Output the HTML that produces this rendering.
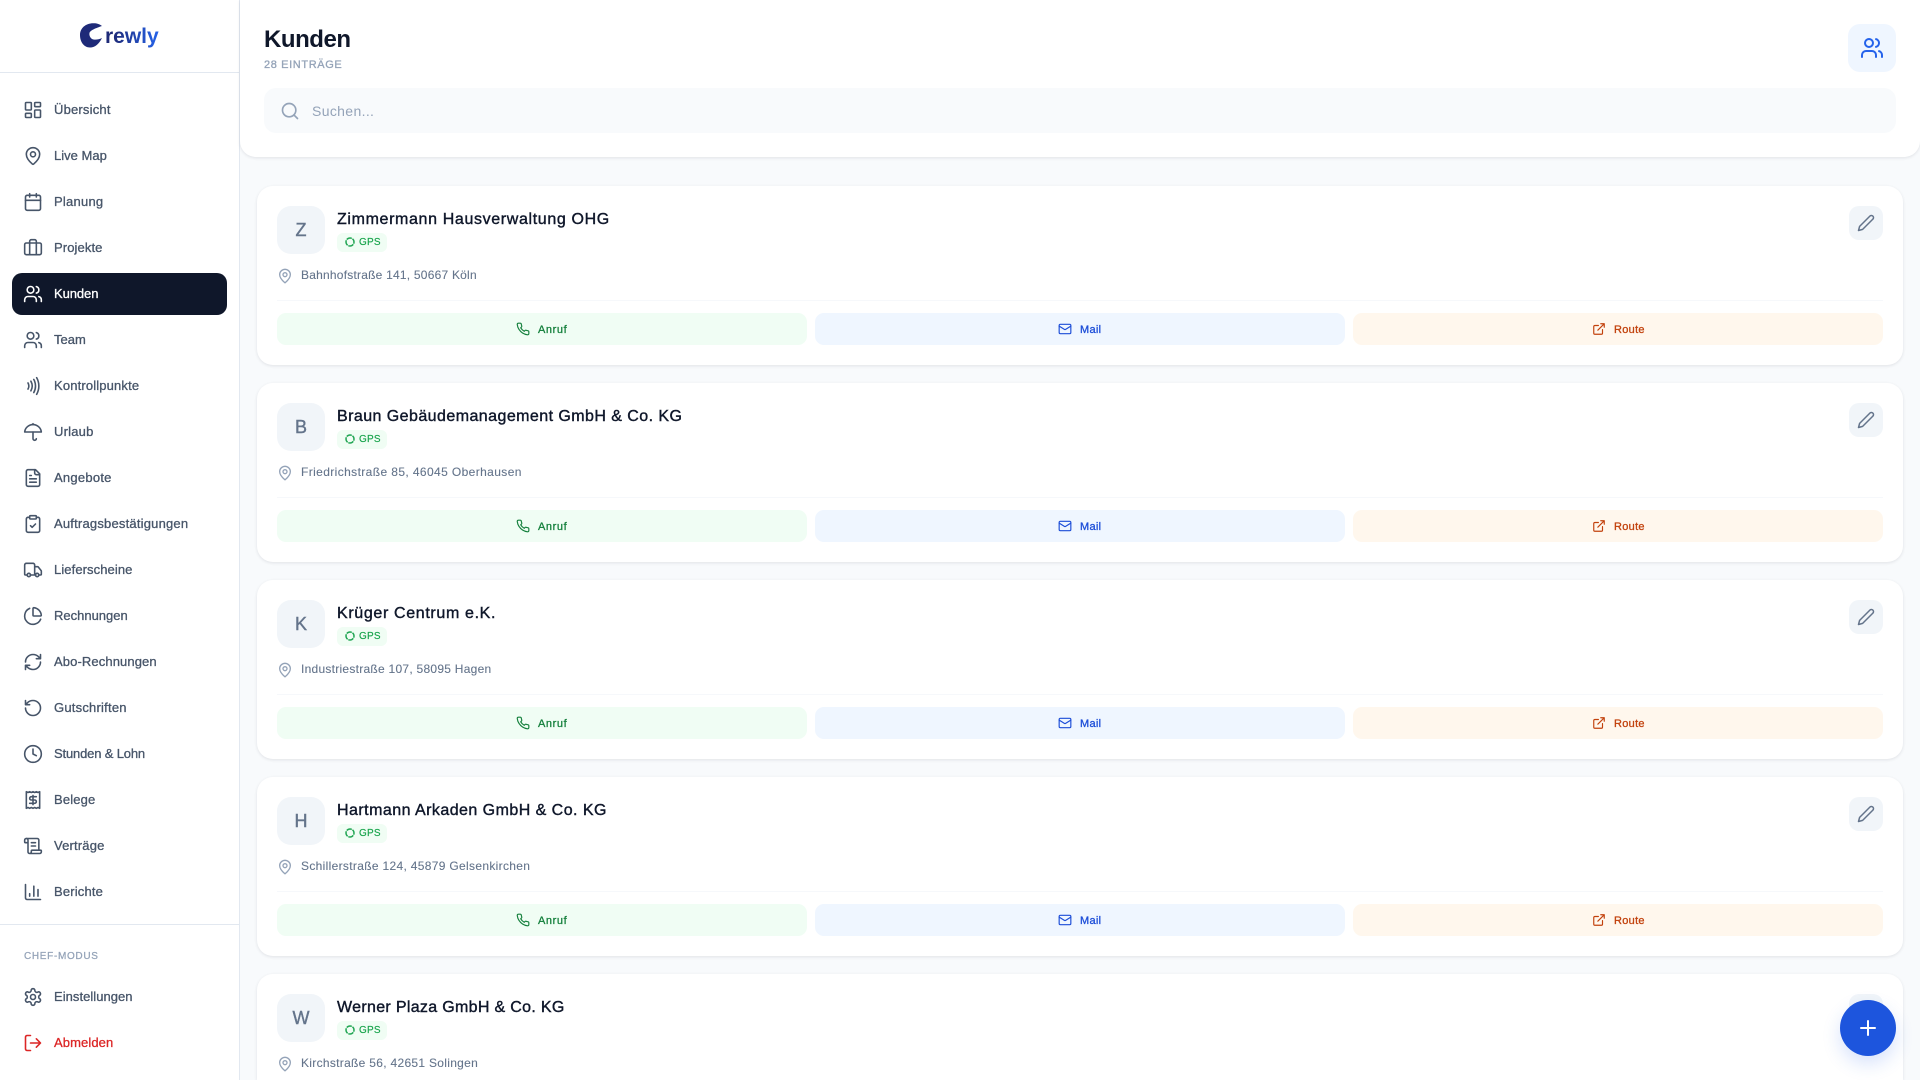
<!DOCTYPE html>
<html lang="de"><head><meta charset="utf-8"><title>Kunden</title>
<style>
*{box-sizing:border-box;margin:0;padding:0}
html,body{width:1920px;height:1080px;overflow:hidden;background:#f8fafc;font-family:"Liberation Sans",sans-serif;position:relative}
svg.i{fill:none;stroke:currentColor;stroke-width:2;stroke-linecap:round;stroke-linejoin:round;display:block;position:absolute}
#side{position:absolute;left:0;top:0;width:240px;height:1080px;background:#fff;border-right:1px solid #e2e8f0}
.hr{position:absolute;left:0;width:239px;height:1px;background:#e2e8f0}
.nav{position:absolute;left:12px;width:215px;height:42px;border-radius:10px;color:#475569;font-size:13px;line-height:42px;padding-left:42px;letter-spacing:.2px;-webkit-text-stroke:.3px currentColor;white-space:nowrap}
.nav svg{left:11px;top:11px;width:20px;height:20px;stroke-width:1.9}
.nav.on{background:#0f172a;color:#fff}
.nav.red{color:#dc2626}
#chef{position:absolute;left:24px;top:951px;font-size:10px;line-height:12px;letter-spacing:.68px;color:#94a3b8;-webkit-text-stroke:.25px currentColor}
#head{position:absolute;left:240px;top:0;width:1680px;height:157px;background:#fff;border-radius:0 0 16px 16px;box-shadow:0 1px 3px rgba(15,23,42,.1)}
h1{position:absolute;left:24px;top:25px;font-size:24px;line-height:30px;font-weight:700;color:#0f172a;letter-spacing:-.45px}
#cnt{position:absolute;left:24px;top:58px;font-size:11px;line-height:14px;color:#94a3b8;letter-spacing:.62px;-webkit-text-stroke:.3px currentColor}
#hi{position:absolute;left:1608px;top:24px;width:48px;height:48px;border-radius:12px;background:#eff6ff;color:#2563eb}
#hi svg{left:12px;top:12px;width:24px;height:24px}
#s{position:absolute;left:24px;top:88px;width:1632px;height:45px;border-radius:12px;background:#f8fafc;color:#94a3b8;font-size:14px;line-height:47px;padding-left:48px;letter-spacing:.35px}
#s svg{left:16px;top:13px;width:20px;height:20px}
.card{position:absolute;left:257px;width:1646px;height:179px;background:#fff;border-radius:16px;box-shadow:0 1px 3px rgba(15,23,42,.1)}
.av{position:absolute;left:20px;top:20px;width:48px;height:48px;border-radius:14px;background:#f1f5f9;color:#64748b;font-size:18px;line-height:48px;text-align:center;-webkit-text-stroke:.4px currentColor}
.nm{position:absolute;left:80px;top:24px;font-size:16px;line-height:20px;color:#0f172a;-webkit-text-stroke:.4px currentColor;white-space:nowrap}
.gps{position:absolute;left:80px;top:47px;width:50px;height:19px;border-radius:6px;background:#f0fdf4;color:#16a34a;font-size:10px;line-height:19px;padding-left:22px;letter-spacing:.2px;-webkit-text-stroke:.15px currentColor}
.gps svg{left:7px;top:3px;width:12px;height:12px;stroke-width:3;stroke-linecap:butt;color:#22a654}
.ad{position:absolute;left:44px;top:81px;font-size:12px;line-height:16px;color:#64748b;white-space:nowrap;-webkit-text-stroke:.1px currentColor}
.pin{left:20px;top:82px;width:16px;height:16px;color:#94a3b8;stroke-width:2}
.ln{position:absolute;left:20px;top:114px;width:1606px;height:1px;background:#f6f8fb}
.b{position:absolute;top:127px;width:530px;height:32px;border-radius:9px;font-size:11px;font-weight:400;line-height:34px;-webkit-text-stroke:.3px currentColor;letter-spacing:.3px;white-space:nowrap}
.b span{position:absolute;top:0}
.b svg{top:9px;width:14px;height:14px}
.g{left:20px;background:#f0fdf4;color:#15803d;letter-spacing:.6px}
.u{left:558px;background:#eff6ff;color:#1d4ed8}
.o{left:1096px;background:#fff7ed;color:#c2410c}
.g svg{left:239px}.g span{left:261px}
.u svg{left:243px}.u span{left:265px}
.o svg{left:239px}.o span{left:261px}
.ed{position:absolute;left:1592px;top:20px;width:34px;height:34px;border-radius:10px;background:#f1f5f9;color:#64748b}
.ed svg{left:8px;top:8px;width:18px;height:18px}
#fab{position:absolute;left:1840px;top:1000px;width:56px;height:56px;border-radius:50%;background:#1d55dd;color:#fff;box-shadow:0 8px 18px rgba(37,99,235,.18)}
#fab svg{left:16px;top:16px;width:24px;height:24px}
</style></head><body>
<svg width="0" height="0" style="position:absolute"><defs>
<symbol id="dash" viewBox="0 0 24 24"><rect x="3" y="3" width="7" height="9" rx="1"/><rect x="14" y="3" width="7" height="5" rx="1"/><rect x="14" y="12" width="7" height="9" rx="1"/><rect x="3" y="16" width="7" height="5" rx="1"/></symbol>
<symbol id="pin" viewBox="0 0 24 24"><path d="M20 10c0 4.993-5.539 10.193-7.399 11.799a1 1 0 0 1-1.202 0C9.539 20.193 4 14.993 4 10a8 8 0 0 1 16 0"/><circle cx="12" cy="10" r="3"/></symbol>
<symbol id="cal" viewBox="0 0 24 24"><path d="M8 2v4M16 2v4"/><rect x="3" y="4" width="18" height="18" rx="2"/><path d="M3 10h18"/></symbol>
<symbol id="brief" viewBox="0 0 24 24"><path d="M16 20V4a2 2 0 0 0-2-2h-4a2 2 0 0 0-2 2v16"/><rect x="2" y="6" width="20" height="14" rx="2"/></symbol>
<symbol id="users" viewBox="0 0 24 24"><path d="M16 21v-2a4 4 0 0 0-4-4H6a4 4 0 0 0-4 4v2"/><circle cx="9" cy="7" r="4"/><path d="M22 21v-2a4 4 0 0 0-3-3.87M16 3.13a4 4 0 0 1 0 7.75"/></symbol>
<symbol id="nfc" viewBox="0 0 24 24"><path d="M6 8.32a7.43 7.43 0 0 1 0 7.36M9.46 6.21a11.76 11.76 0 0 1 0 11.58M12.91 4.1a15.91 15.91 0 0 1 .01 15.8M16.37 2a20.16 20.16 0 0 1 0 20"/></symbol>
<symbol id="umb" viewBox="0 0 24 24"><path d="M22 12a10.06 10.06 1 0 0-20 0Z"/><path d="M12 12v8a2 2 0 0 0 4 0M12 2v1"/></symbol>
<symbol id="file" viewBox="0 0 24 24"><path d="M15 2H6a2 2 0 0 0-2 2v16a2 2 0 0 0 2 2h12a2 2 0 0 0 2-2V7Z"/><path d="M14 2v4a2 2 0 0 0 2 2h4M10 9H8M16 13H8M16 17H8"/></symbol>
<symbol id="clip" viewBox="0 0 24 24"><rect x="8" y="2" width="8" height="4" rx="1"/><path d="M16 4h2a2 2 0 0 1 2 2v14a2 2 0 0 1-2 2H6a2 2 0 0 1-2-2V6a2 2 0 0 1 2-2h2"/><path d="m9 14 2 2 4-4"/></symbol>
<symbol id="truck" viewBox="0 0 24 24"><path d="M14 18V6a2 2 0 0 0-2-2H4a2 2 0 0 0-2 2v11a1 1 0 0 0 1 1h2M15 18H9M19 18h2a1 1 0 0 0 1-1v-3.65a1 1 0 0 0-.22-.624l-3.48-4.35A1 1 0 0 0 17.52 8H14"/><circle cx="17" cy="18" r="2"/><circle cx="7" cy="18" r="2"/></symbol>
<symbol id="pie" viewBox="0 0 24 24"><path d="M21 12c.552 0 1.005-.449.95-.998a10 10 0 0 0-8.953-8.951c-.55-.055-.998.398-.998.95v8a1 1 0 0 0 1 1z"/><path d="M21.21 15.89A10 10 0 1 1 8 2.83"/></symbol>
<symbol id="ref" viewBox="0 0 24 24"><path d="M3 12a9 9 0 0 1 9-9 9.75 9.75 0 0 1 6.74 2.74L21 8M21 3v5h-5M21 12a9 9 0 0 1-9 9 9.75 9.75 0 0 1-6.74-2.74L3 16M8 16H3v5"/></symbol>
<symbol id="rot" viewBox="0 0 24 24"><path d="M3 12a9 9 0 1 0 9-9 9.75 9.75 0 0 0-6.74 2.74L3 8M3 3v5h5"/></symbol>
<symbol id="clock" viewBox="0 0 24 24"><circle cx="12" cy="12" r="10"/><path d="M12 6v6l4 2"/></symbol>
<symbol id="rec" viewBox="0 0 24 24"><path d="M4 2v20l2-1 2 1 2-1 2 1 2-1 2 1 2-1 2 1V2l-2 1-2-1-2 1-2-1-2 1-2-1-2 1Z"/><path d="M16 8h-6a2 2 0 1 0 0 4h4a2 2 0 1 1 0 4H8M12 17.5v-11"/></symbol>
<symbol id="scroll" viewBox="0 0 24 24"><path d="M15 12h-5M15 8h-5M19 17V5a2 2 0 0 0-2-2H4"/><path d="M8 21h12a2 2 0 0 0 2-2v-1a1 1 0 0 0-1-1H11a1 1 0 0 0-1 1v1a2 2 0 1 1-4 0V5a2 2 0 1 0-4 0v2a1 1 0 0 0 1 1h3"/></symbol>
<symbol id="bar" viewBox="0 0 24 24"><path d="M3 3v16a2 2 0 0 0 2 2h16M18 17V9M13 17V5M8 17v-3"/></symbol>
<symbol id="gear" viewBox="0 0 24 24"><path d="M12.22 2h-.44a2 2 0 0 0-2 2v.18a2 2 0 0 1-1 1.73l-.43.25a2 2 0 0 1-2 0l-.15-.08a2 2 0 0 0-2.73.73l-.22.38a2 2 0 0 0 .73 2.73l.15.1a2 2 0 0 1 1 1.72v.51a2 2 0 0 1-1 1.74l-.15.09a2 2 0 0 0-.73 2.73l.22.38a2 2 0 0 0 2.73.73l.15-.08a2 2 0 0 1 2 0l.43.25a2 2 0 0 1 1 1.73V20a2 2 0 0 0 2 2h.44a2 2 0 0 0 2-2v-.18a2 2 0 0 1 1-1.73l.43-.25a2 2 0 0 1 2 0l.15.08a2 2 0 0 0 2.73-.73l.22-.39a2 2 0 0 0-.73-2.73l-.15-.08a2 2 0 0 1-1-1.74v-.5a2 2 0 0 1 1-1.74l.15-.09a2 2 0 0 0 .73-2.73l-.22-.38a2 2 0 0 0-2.73-.73l-.15.08a2 2 0 0 1-2 0l-.43-.25a2 2 0 0 1-1-1.73V4a2 2 0 0 0-2-2z"/><circle cx="12" cy="12" r="3"/></symbol>
<symbol id="out" viewBox="0 0 24 24"><path d="M9 21H5a2 2 0 0 1-2-2V5a2 2 0 0 1 2-2h4M16 17l5-5-5-5M21 12H9"/></symbol>
<symbol id="phone" viewBox="0 0 24 24"><path d="M22 16.92v3a2 2 0 0 1-2.18 2 19.79 19.79 0 0 1-8.63-3.07 19.5 19.5 0 0 1-6-6 19.79 19.79 0 0 1-3.07-8.67A2 2 0 0 1 4.11 2h3a2 2 0 0 1 2 1.72 12.84 12.84 0 0 0 .7 2.81 2 2 0 0 1-.45 2.11L8.09 9.91a16 16 0 0 0 6 6l1.27-1.27a2 2 0 0 1 2.11-.45 12.84 12.84 0 0 0 2.81.7A2 2 0 0 1 22 16.92z"/></symbol>
<symbol id="mail" viewBox="0 0 24 24"><rect x="2" y="4" width="20" height="16" rx="2"/><path d="m22 7-8.97 5.7a1.94 1.94 0 0 1-2.06 0L2 7"/></symbol>
<symbol id="ext" viewBox="0 0 24 24"><path d="M18 13v6a2 2 0 0 1-2 2H5a2 2 0 0 1-2-2V8a2 2 0 0 1 2-2h6M15 3h6v6M10 14 21 3"/></symbol>
<symbol id="pen" viewBox="0 0 24 24"><path d="M17 3a2.85 2.83 0 1 1 4 4L7.5 20.5 2 22l1.5-5.5Z"/></symbol>
<symbol id="search" viewBox="0 0 24 24"><circle cx="11" cy="11" r="8"/><path d="m21 21-4.3-4.3"/></symbol>
<symbol id="plus" viewBox="0 0 24 24"><path d="M5 12h14M12 5v14"/></symbol>
<symbol id="loc" viewBox="0 0 24 24"><circle cx="12" cy="12" r="8" stroke-dasharray="11 1.57" stroke-dashoffset="-5"/></symbol>
</defs></svg>

<div id="side">
<svg style="position:absolute;left:79px;top:22px" width="28" height="27" viewBox="0 0 28 27"><path fill="#1e2a78" d="M23 4C20 2 18 1.300 15 1.300C7 1 1 6 1 13C1 20 5 25.500 11 25.500C16 25.500 20 22 23 16C19 18 15 18 13 17C11 15.500 10 13 10.500 11C11 9 14 7 23 4Z"/></svg>
<svg style="position:absolute;left:100px;top:20px" width="62" height="32"><defs><linearGradient id="lg" x1="0" x2="1"><stop offset=".15" stop-color="#1e2a78"/><stop offset="1" stop-color="#2563eb"/></linearGradient></defs><text x="5" y="23" font-family="Liberation Sans, sans-serif" font-weight="700" font-size="21" fill="url(#lg)">rewly</text></svg>
<div class="hr" style="top:72px"></div>
<div class="nav" style="top:89px;letter-spacing:.19px"><svg class="i"><use href="#dash"/></svg>Übersicht</div>
<div class="nav" style="top:135px;letter-spacing:.02px"><svg class="i"><use href="#pin"/></svg>Live Map</div>
<div class="nav" style="top:181px;letter-spacing:.24px"><svg class="i"><use href="#cal"/></svg>Planung</div>
<div class="nav" style="top:227px;letter-spacing:.1px"><svg class="i"><use href="#brief"/></svg>Projekte</div>
<div class="nav on" style="top:273px;letter-spacing:-.08px"><svg class="i"><use href="#users"/></svg>Kunden</div>
<div class="nav" style="top:319px;letter-spacing:0"><svg class="i"><use href="#users"/></svg>Team</div>
<div class="nav" style="top:365px;letter-spacing:.15px"><svg class="i"><use href="#nfc"/></svg>Kontrollpunkte</div>
<div class="nav" style="top:411px"><svg class="i"><use href="#umb"/></svg>Urlaub</div>
<div class="nav" style="top:457px;letter-spacing:.25px"><svg class="i"><use href="#file"/></svg>Angebote</div>
<div class="nav" style="top:503px"><svg class="i"><use href="#clip"/></svg>Auftragsbestätigungen</div>
<div class="nav" style="top:549px;letter-spacing:.09px"><svg class="i"><use href="#truck"/></svg>Lieferscheine</div>
<div class="nav" style="top:595px;letter-spacing:0"><svg class="i"><use href="#pie"/></svg>Rechnungen</div>
<div class="nav" style="top:641px;letter-spacing:.11px"><svg class="i"><use href="#ref"/></svg>Abo-Rechnungen</div>
<div class="nav" style="top:687px;letter-spacing:.22px"><svg class="i"><use href="#rot"/></svg>Gutschriften</div>
<div class="nav" style="top:733px;letter-spacing:-.16px"><svg class="i"><use href="#clock"/></svg>Stunden &amp; Lohn</div>
<div class="nav" style="top:779px;letter-spacing:.15px"><svg class="i"><use href="#rec"/></svg>Belege</div>
<div class="nav" style="top:825px;letter-spacing:.17px"><svg class="i"><use href="#scroll"/></svg>Verträge</div>
<div class="nav" style="top:871px;letter-spacing:.17px"><svg class="i"><use href="#bar"/></svg>Berichte</div>
<div class="hr" style="top:924px"></div>
<div id="chef">CHEF-MODUS</div>
<div class="nav" style="top:976px;letter-spacing:.04px"><svg class="i"><use href="#gear"/></svg>Einstellungen</div>
<div class="nav red" style="top:1022px;letter-spacing:.1px"><svg class="i"><use href="#out"/></svg>Abmelden</div>
</div>

<div id="head">
<h1>Kunden</h1>
<div id="cnt">28 EINTRÄGE</div>
<div id="hi"><svg class="i"><use href="#users"/></svg></div>
<div id="s"><svg class="i"><use href="#search"/></svg>Suchen...</div>
</div>

<div class="card" style="top:186px"><div class="av">Z</div><div class="nm" style="letter-spacing:.64px">Zimmermann Hausverwaltung OHG</div><div class="gps"><svg class="i"><use href="#loc"/></svg>GPS</div><svg class="i pin"><use href="#pin"/></svg><div class="ad" style="letter-spacing:.22px">Bahnhofstraße 141, 50667 Köln</div><div class="ln"></div><div class="b g"><svg class="i"><use href="#phone"/></svg><span>Anruf</span></div><div class="b u"><svg class="i"><use href="#mail"/></svg><span>Mail</span></div><div class="b o"><svg class="i"><use href="#ext"/></svg><span>Route</span></div><div class="ed"><svg class="i"><use href="#pen"/></svg></div></div>

<div class="card" style="top:383px"><div class="av">B</div><div class="nm" style="letter-spacing:.44px">Braun Gebäudemanagement GmbH &amp; Co. KG</div><div class="gps"><svg class="i"><use href="#loc"/></svg>GPS</div><svg class="i pin"><use href="#pin"/></svg><div class="ad" style="letter-spacing:.39px">Friedrichstraße 85, 46045 Oberhausen</div><div class="ln"></div><div class="b g"><svg class="i"><use href="#phone"/></svg><span>Anruf</span></div><div class="b u"><svg class="i"><use href="#mail"/></svg><span>Mail</span></div><div class="b o"><svg class="i"><use href="#ext"/></svg><span>Route</span></div><div class="ed"><svg class="i"><use href="#pen"/></svg></div></div>

<div class="card" style="top:580px"><div class="av">K</div><div class="nm" style="letter-spacing:.65px">Krüger Centrum e.K.</div><div class="gps"><svg class="i"><use href="#loc"/></svg>GPS</div><svg class="i pin"><use href="#pin"/></svg><div class="ad" style="letter-spacing:.26px">Industriestraße 107, 58095 Hagen</div><div class="ln"></div><div class="b g"><svg class="i"><use href="#phone"/></svg><span>Anruf</span></div><div class="b u"><svg class="i"><use href="#mail"/></svg><span>Mail</span></div><div class="b o"><svg class="i"><use href="#ext"/></svg><span>Route</span></div><div class="ed"><svg class="i"><use href="#pen"/></svg></div></div>

<div class="card" style="top:777px"><div class="av">H</div><div class="nm" style="letter-spacing:.46px">Hartmann Arkaden GmbH &amp; Co. KG</div><div class="gps"><svg class="i"><use href="#loc"/></svg>GPS</div><svg class="i pin"><use href="#pin"/></svg><div class="ad" style="letter-spacing:.32px">Schillerstraße 124, 45879 Gelsenkirchen</div><div class="ln"></div><div class="b g"><svg class="i"><use href="#phone"/></svg><span>Anruf</span></div><div class="b u"><svg class="i"><use href="#mail"/></svg><span>Mail</span></div><div class="b o"><svg class="i"><use href="#ext"/></svg><span>Route</span></div><div class="ed"><svg class="i"><use href="#pen"/></svg></div></div>

<div class="card" style="top:974px;height:106px;border-radius:16px 16px 0 0"><div class="av">W</div><div class="nm" style="letter-spacing:.32px">Werner Plaza GmbH &amp; Co. KG</div><div class="gps"><svg class="i"><use href="#loc"/></svg>GPS</div><svg class="i pin"><use href="#pin"/></svg><div class="ad" style="letter-spacing:.3px">Kirchstraße 56, 42651 Solingen</div><div class="ed"><svg class="i"><use href="#pen"/></svg></div></div>

<div id="fab"><svg class="i"><use href="#plus"/></svg></div>
</body></html>
